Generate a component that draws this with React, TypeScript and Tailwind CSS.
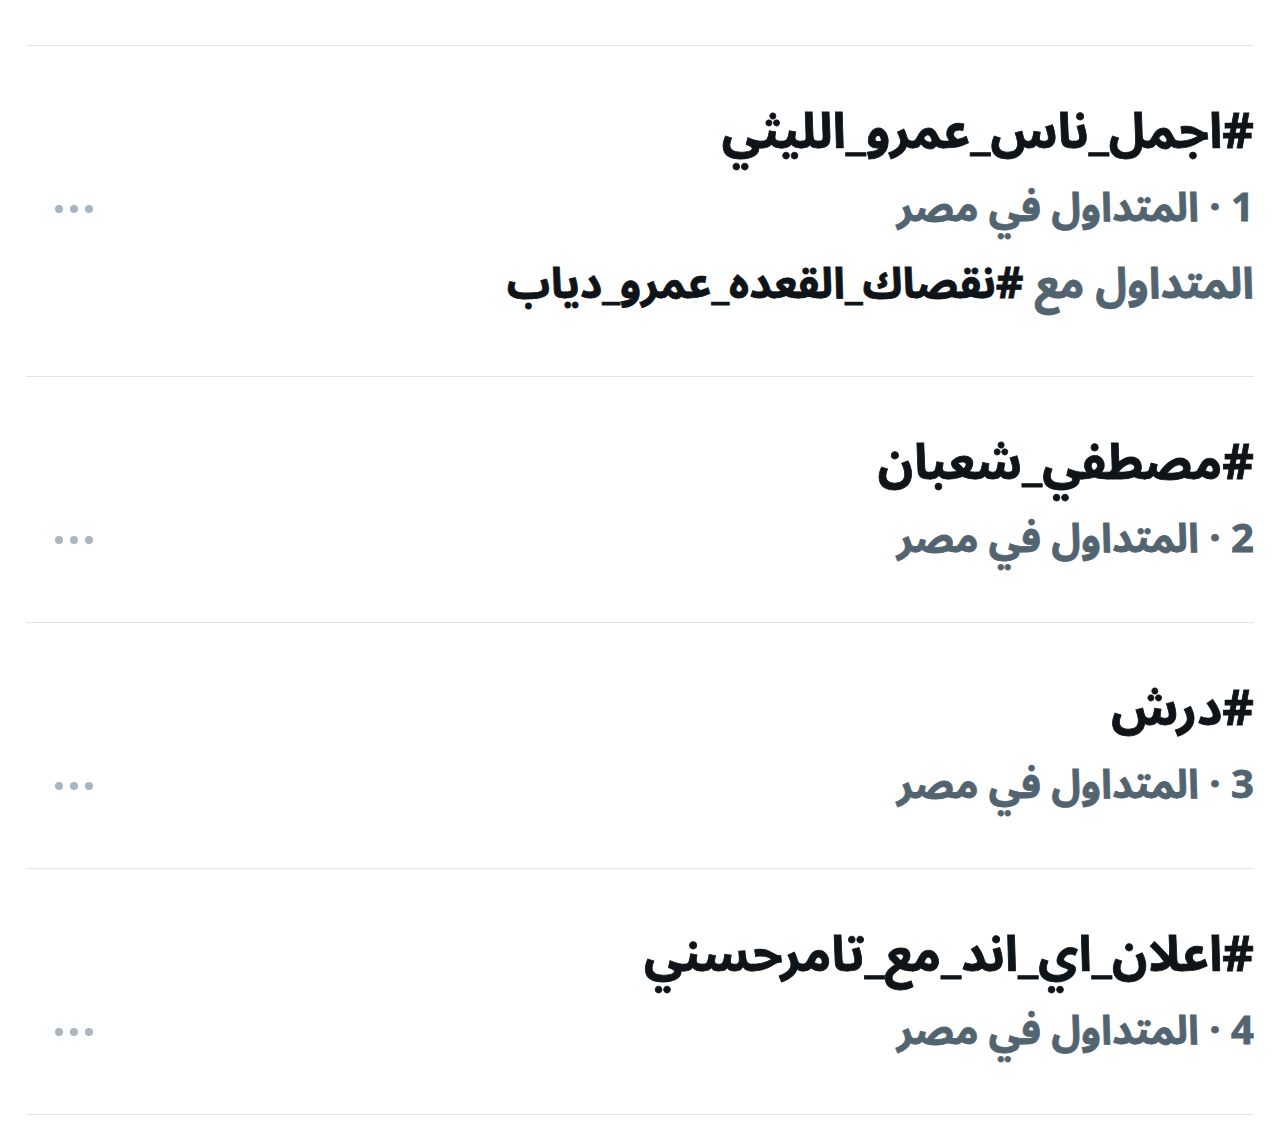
import React from "react";

interface Trend {
  rank: number;
  tag: string;
  with?: string;
}

const trends: Trend[] = [
  { rank: 1, tag: "#اجمل_ناس_عمرو_الليثي", with: "#نقصاك_القعده_عمرو_دياب" },
  { rank: 2, tag: "#مصطفي_شعبان" },
  { rank: 3, tag: "#درش" },
  { rank: 4, tag: "#اعلان_اي_اند_مع_تامرحسني" },
];

function Dots() {
  return (
    <div className="flex h-[76px] items-center gap-[7px]">
      <span className="h-[8px] w-[8px] rounded-full bg-[#a9b6c2]" />
      <span className="h-[8px] w-[8px] rounded-full bg-[#a9b6c2]" />
      <span className="h-[8px] w-[8px] rounded-full bg-[#a9b6c2]" />
    </div>
  );
}

export default function App() {
  return (
    <div
      dir="rtl"
      className="min-h-[1140px] w-[1280px] bg-white px-[26px] pt-[45px]"
      style={{ fontFamily: '"Noto Sans Arabic", "DejaVu Sans", sans-serif' }}
    >
      <div className="border-t border-[#dfe3e6]">
        {trends.map((t) => (
          <div
            key={t.rank}
            className="flex justify-between border-b border-[#dfe3e6] pb-[44px] pt-[49px]"
          >
            <div className="font-bold [-webkit-text-stroke:0.8px]">
              <div className="h-[76px] text-[49px] leading-[76px] text-[#0f1419]">{t.tag}</div>
              <div className="h-[76px] text-[40px] leading-[76px] text-[#536471]">
                {t.rank} · المتداول في مصر
              </div>
              {t.with && (
                <div className="mb-[9px] h-[76px] text-[43px] leading-[76px] text-[#536471]">
                  المتداول مع <span className="text-[#0f1419]">{t.with}</span>
                </div>
              )}
            </div>
            <div className="pl-[29px] pt-[76px]" dir="ltr">
              <Dots />
            </div>
          </div>
        ))}
      </div>
    </div>
  );
}
